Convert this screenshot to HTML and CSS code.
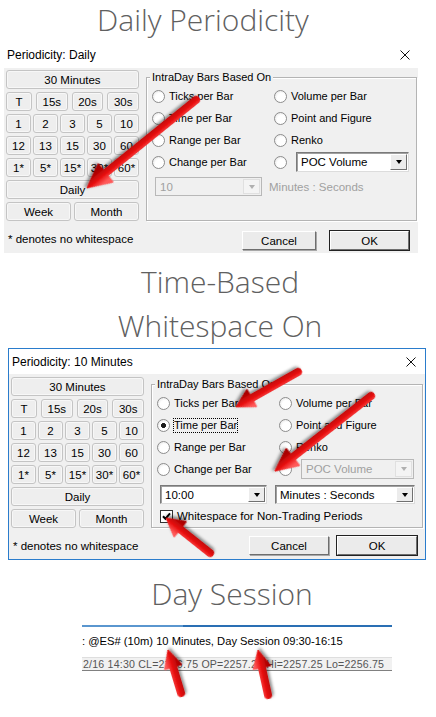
FILE: index.html
```html
<!DOCTYPE html>
<html lang="en">
<head>
    <meta charset="UTF-8">
    <meta name="viewport" content="width=device-width, initial-scale=1.0">
    <title>Periodicity Settings</title>
    <link rel="stylesheet" href="styles.css">
</head>
<body>
    <div class="page">
        <h1 class="title title-daily">Daily Periodicity</h1>

        <!-- first dialog: daily selected -->
        <div class="dialog">
            <div class="titlebar">
                <span>Periodicity: Daily</span>
                <svg class="close" width="10" height="10" viewBox="0 0 10 10"><path d="M0.5 0.5L9.5 9.5M9.5 0.5L0.5 9.5"/></svg>
            </div>
            <div class="dialog-body">
                <div class="presets">
                    <button class="btn">30 Minutes</button>
                    <div class="btn-row row-four">
                        <button class="btn">T</button>
                        <button class="btn">15s</button>
                        <button class="btn">20s</button>
                        <button class="btn">30s</button>
                    </div>
                    <div class="btn-row row-five">
                        <button class="btn">1</button>
                        <button class="btn">2</button>
                        <button class="btn">3</button>
                        <button class="btn">5</button>
                        <button class="btn">10</button>
                    </div>
                    <div class="btn-row row-five">
                        <button class="btn">12</button>
                        <button class="btn">13</button>
                        <button class="btn">15</button>
                        <button class="btn">30</button>
                        <button class="btn">60</button>
                    </div>
                    <div class="btn-row row-five">
                        <button class="btn">1*</button>
                        <button class="btn">5*</button>
                        <button class="btn">15*</button>
                        <button class="btn">30*</button>
                        <button class="btn">60*</button>
                    </div>
                    <button class="btn">Daily</button>
                    <div class="btn-row row-two">
                        <button class="btn">Week</button>
                        <button class="btn">Month</button>
                    </div>
                    <p class="note">* denotes no whitespace</p>
                </div>

                <div class="options">
                    <div class="group">
                        <div class="group-label">IntraDay Bars Based On</div>
                        <div class="radios">
                            <div class="radio"><span class="dot"></span>Ticks per Bar</div>
                            <div class="radio"><span class="dot"></span>Volume per Bar</div>
                            <div class="radio"><span class="dot"></span>Time per Bar</div>
                            <div class="radio"><span class="dot"></span>Point and Figure</div>
                            <div class="radio"><span class="dot"></span>Range per Bar</div>
                            <div class="radio"><span class="dot"></span>Renko</div>
                            <div class="radio"><span class="dot"></span>Change per Bar</div>
                            <div class="radio radio-select">
                                <span class="dot"></span>
                                <div class="combo combo-poc"><span class="combo-value">POC Volume</span><span class="combo-btn"></span></div>
                            </div>
                        </div>
                        <div class="interval">
                            <div class="combo combo-time disabled"><span class="combo-value">10</span><span class="combo-btn"></span></div>
                            <span class="muted">Minutes : Seconds</span>
                        </div>
                    </div>
                    <div class="actions">
                        <button class="push">Cancel</button>
                        <button class="push push-default">OK</button>
                    </div>
                </div>
            </div>
        </div>

        <h1 class="title title-whitespace">Time-Based<br>Whitespace On</h1>

        <!-- second dialog: time per bar with whitespace -->
        <div class="dialog dialog-framed">
            <div class="titlebar">
                <span>Periodicity: 10 Minutes</span>
                <svg class="close" width="10" height="10" viewBox="0 0 10 10"><path d="M0.5 0.5L9.5 9.5M9.5 0.5L0.5 9.5"/></svg>
            </div>
            <div class="dialog-body">
                <div class="presets">
                    <button class="btn">30 Minutes</button>
                    <div class="btn-row row-four">
                        <button class="btn">T</button>
                        <button class="btn">15s</button>
                        <button class="btn">20s</button>
                        <button class="btn">30s</button>
                    </div>
                    <div class="btn-row row-five">
                        <button class="btn">1</button>
                        <button class="btn">2</button>
                        <button class="btn">3</button>
                        <button class="btn">5</button>
                        <button class="btn">10</button>
                    </div>
                    <div class="btn-row row-five">
                        <button class="btn">12</button>
                        <button class="btn">13</button>
                        <button class="btn">15</button>
                        <button class="btn">30</button>
                        <button class="btn">60</button>
                    </div>
                    <div class="btn-row row-five">
                        <button class="btn">1*</button>
                        <button class="btn">5*</button>
                        <button class="btn">15*</button>
                        <button class="btn">30*</button>
                        <button class="btn">60*</button>
                    </div>
                    <button class="btn">Daily</button>
                    <div class="btn-row row-two">
                        <button class="btn">Week</button>
                        <button class="btn">Month</button>
                    </div>
                    <p class="note">* denotes no whitespace</p>
                </div>

                <div class="options">
                    <div class="group">
                        <div class="group-label">IntraDay Bars Based On</div>
                        <div class="radios">
                            <div class="radio"><span class="dot"></span>Ticks per Bar</div>
                            <div class="radio"><span class="dot"></span>Volume per Bar</div>
                            <div class="radio"><span class="dot checked"></span><span class="focus">Time per Bar</span></div>
                            <div class="radio"><span class="dot"></span>Point and Figure</div>
                            <div class="radio"><span class="dot"></span>Range per Bar</div>
                            <div class="radio"><span class="dot"></span>Renko</div>
                            <div class="radio"><span class="dot"></span>Change per Bar</div>
                            <div class="radio radio-select">
                                <span class="dot"></span>
                                <div class="combo combo-poc disabled"><span class="combo-value">POC Volume</span><span class="combo-btn"></span></div>
                            </div>
                        </div>
                        <div class="interval">
                            <div class="combo combo-time"><span class="combo-value">10:00</span><span class="combo-btn"></span></div>
                            <div class="combo combo-unit"><span class="combo-value">Minutes : Seconds</span><span class="combo-btn"></span></div>
                        </div>
                        <div class="check-row">
                            <span class="checkbox">
                                <svg width="9" height="9" viewBox="0 0 9 9"><path d="M1 4.2L3.4 6.8L8 1.4"/></svg>
                            </span>
                            Whitespace for Non-Trading Periods
                        </div>
                    </div>
                    <div class="actions">
                        <button class="push">Cancel</button>
                        <button class="push push-default">OK</button>
                    </div>
                </div>
            </div>
        </div>

        <h1 class="title title-session">Day Session</h1>

        <div class="chart">
            <div class="chart-rule"></div>
            <div class="chart-caption">: @ES# (10m) 10 Minutes, Day Session 09:30-16:15</div>
            <div class="status">2/16 14:30 CL=2256.75 OP=2257.25 Hi=2257.25 Lo=2256.75</div>
        </div>

        <!-- callout arrows drawn over the screenshots -->
        <svg class="arrows" width="436" height="717" viewBox="0 0 436 717">
            <defs>
                <linearGradient id="redShade" gradientUnits="userSpaceOnUse" x1="0" y1="-7" x2="0" y2="7">
                    <stop offset="0" stop-color="#ff5a5a"/>
                    <stop offset="0.45" stop-color="#e81010"/>
                    <stop offset="1" stop-color="#a80000"/>
                </linearGradient>
                <filter id="arrowShadow" x="-30%" y="-60%" width="160%" height="220%">
                    <feDropShadow dx="1.5" dy="2" stdDeviation="1.4" flood-color="#000" flood-opacity="0.45"/>
                </filter>
            </defs>
            <g class="arrow" transform="translate(196 100) rotate(141.1)">
                <path class="shaft" d="M0 0H118"/>
                <path class="head" d="M116 -12L140 0L116 12Z"/>
            </g>
            <g class="arrow" transform="translate(298 372) rotate(150.6)">
                <path class="shaft" d="M0 0H55"/>
                <path class="head" d="M53 -10L71 0L53 10Z"/>
            </g>
            <g class="arrow" transform="translate(371 396) rotate(142)">
                <path class="shaft" d="M0 0H101"/>
                <path class="head" d="M99 -11L122 0L99 11Z"/>
            </g>
            <g class="arrow" transform="translate(210 553) rotate(218.5)">
                <path class="shaft" d="M0 0H40"/>
                <path class="head" d="M38 -10L56 0L38 10Z"/>
            </g>
            <g class="arrow" transform="translate(181 693) rotate(253.2)">
                <path class="shaft" d="M0 0H29"/>
                <path class="head" d="M27 -9L45 0L27 9Z"/>
            </g>
            <g class="arrow" transform="translate(268 695) rotate(257.5)">
                <path class="shaft" d="M0 0H30"/>
                <path class="head" d="M28 -9L46 0L28 9Z"/>
            </g>
        </svg>
    </div>
</body>
</html>
```

FILE: styles.css
```css
:root {
    --dialog-bg: #f0f0f0;
    --btn-border: #c4c4c4;
    --group-border: #b4b4b4;
    --title-gray: #606060;
    --frame-blue: #2a7ccc;
    --disabled-text: #a0a0a0;
}

body {
    margin: 0;
    background: #ffffff;
    font-family: "Liberation Sans", Arial, sans-serif;
    font-size: 11px;
    color: #000;
}

.page {
    position: relative;
    width: 436px;
    height: 717px;
    overflow: hidden;
}

/* big section headings */
.title {
    margin: 0;
    font-family: "Open Sans", "Noto Sans", sans-serif;
    font-weight: 300;
    font-size: 30px;
    color: var(--title-gray);
    text-align: center;
    line-height: 40px;
}

.title-daily {
    height: 42px;
    padding-right: 30px;
}

.title-whitespace {
    height: 88px;
    padding-top: 7px;
    padding-left: 4px;
    line-height: 44px;
}

.title-session {
    padding-top: 14px;
    padding-left: 28px;
}

/* dialog window */
.dialog {
    width: 414px;
    margin-left: 4px;
    background: var(--dialog-bg);
    box-sizing: border-box;
}

.dialog-framed {
    width: 418px;
    margin-left: 8px;
    border: 1px solid var(--frame-blue);
}

.titlebar {
    height: 26px;
    background: #fff;
    display: flex;
    align-items: center;
    justify-content: space-between;
    padding: 0 8px 0 3px;
    font-size: 12px;
}

.dialog-framed .titlebar {
    height: 25px;
    padding-right: 9px;
}

.close path {
    stroke: #111;
    stroke-width: 1;
    fill: none;
}

.dialog-body {
    height: 185px;
    display: flex;
    gap: 7px;
    padding: 2px 1px 0 2px;
    box-sizing: border-box;
}

.dialog-framed .dialog-body {
    padding: 3px 2px 0 2px;
}

/* left column of preset buttons */
.presets {
    width: 133px;
    display: flex;
    flex-direction: column;
    gap: 3px;
}

.btn {
    height: 19px;
    margin: 0;
    padding: 0;
    font: inherit;
    font-size: 11.5px;
    color: #000;
    background: #eeeeee;
    border: 1px solid var(--btn-border);
    border-radius: 3px;
    box-shadow: inset 0 0 0 1px #f7f7f7;
}

.btn-row {
    display: grid;
    gap: 3px;
}

.row-four {
    grid-template-columns: 26px repeat(3, 1fr);
    gap: 4px;
}

.row-five {
    grid-template-columns: repeat(5, 1fr);
    gap: 2px;
}

.row-two {
    grid-template-columns: 1fr 1fr;
}

.note {
    margin: 8px 0 0 2px;
    font-size: 11.5px;
    line-height: 14px;
}

/* right column */
.options {
    flex: 1;
    display: flex;
    flex-direction: column;
}

.group {
    margin-top: 7px;
    height: 144px;
    padding: 0 5px;
    border: 1px solid var(--group-border);
    box-shadow: inset 1px 1px 0 #fff, 1px 1px 0 #fff;
    box-sizing: border-box;
}

.group-label {
    width: fit-content;
    margin: -7px 0 0 -2px;
    padding: 0 2px;
    line-height: 13px;
    background: var(--dialog-bg);
}

.radios {
    display: grid;
    grid-template-columns: 122px 1fr;
    grid-auto-rows: 22px;
    margin-top: 1px;
}

.radio {
    display: flex;
    align-items: center;
    gap: 4px;
    white-space: nowrap;
}

.dot {
    width: 11px;
    height: 11px;
    border-radius: 50%;
    border: 1px solid #8d8d8d;
    background: radial-gradient(circle at 60% 60%, #ffffff 45%, #dcdcdc 100%);
    flex: none;
}

.dot.checked {
    background: radial-gradient(circle, #1a1a1a 2.2px, transparent 2.8px),
                radial-gradient(circle at 60% 60%, #ffffff 45%, #dcdcdc 100%);
}

.focus {
    outline: 1px dotted #000;
    outline-offset: 0;
    line-height: 13px;
}

.radio-select {
    gap: 9px;
}

/* combo boxes */
.combo {
    display: flex;
    height: 20px;
    background: #fff;
    border: 1px solid #7a7a7a;
    border-right-color: #dcdcdc;
    border-bottom-color: #dcdcdc;
    box-shadow: inset 1px 1px 0 #a0a0a0;
    box-sizing: border-box;
    font-size: 11.5px;
}

.combo-value {
    flex: 1;
    padding-left: 4px;
    line-height: 18px;
    white-space: nowrap;
    overflow: hidden;
}

.combo-btn {
    width: 15px;
    margin: 1px;
    background: #ececec;
    border: 1px solid #fff;
    border-right-color: #707070;
    border-bottom-color: #707070;
    display: flex;
    align-items: center;
    justify-content: center;
}

.combo-btn::after {
    content: "";
    border-left: 3.5px solid transparent;
    border-right: 3.5px solid transparent;
    border-top: 4px solid #000;
}

.combo.disabled {
    background: var(--dialog-bg);
    color: var(--disabled-text);
    border-color: #b8b8b8;
    box-shadow: none;
}

.combo.disabled .combo-btn {
    border-color: #e0e0e0;
    background: #f4f4f4;
}

.combo.disabled .combo-btn::after {
    border-top-color: #b0b0b0;
}

.combo-poc {
    width: 113px;
}

.combo-time {
    width: 107px;
    height: 19px;
}

.combo-unit {
    width: 140px;
    height: 19px;
}

.interval {
    display: flex;
    align-items: center;
    gap: 7px;
    margin: 4px 0 0 3px;
}

.dialog-framed .interval {
    gap: 8px;
    margin-top: 5px;
}

.muted {
    color: var(--disabled-text);
    font-size: 11.5px;
}

.check-row {
    display: flex;
    align-items: center;
    gap: 4px;
    margin: 6px 0 0 3px;
    line-height: 13px;
    font-size: 11.5px;
}

.checkbox {
    width: 11px;
    height: 11px;
    border: 1px solid #333;
    background: #fff;
    display: flex;
    align-items: center;
    justify-content: center;
}

.checkbox path {
    stroke: #000;
    stroke-width: 2;
    fill: none;
}

/* Cancel / OK */
.actions {
    display: flex;
    justify-content: flex-end;
    gap: 14px;
    margin-top: 10px;
    padding-right: 8px;
}

.push {
    width: 74px;
    height: 19px;
    margin: 0;
    padding: 0;
    font: inherit;
    font-size: 11.5px;
    color: #000;
    background: #ebebeb;
    border: 1px solid #fff;
    border-right-color: #6e6e6e;
    border-bottom-color: #6e6e6e;
    box-shadow: 1px 1px 0 #a8a8a8;
}

.push-default {
    width: 79px;
    outline: 1px solid #222;
}

.dialog-framed .actions {
    gap: 8px;
    margin-top: 8px;
    padding-right: 6px;
}

.dialog-framed .push {
    width: 80px;
}

/* chart title strip */
.chart {
    width: 310px;
    margin: 11px 0 0 82px;
}

.chart-rule {
    height: 2px;
    background: linear-gradient(to right, #5a96cf 0, #5a96cf 101px, #2a6fb4 101px);
}

.chart-caption {
    margin-top: 6px;
    line-height: 16px;
    font-size: 11.2px;
    white-space: nowrap;
}

.status {
    height: 14px;
    margin-top: 8px;
    padding-left: 1px;
    line-height: 13px;
    font-size: 10.6px;
    letter-spacing: 0.2px;
    color: #555;
    background: #f1f1f1;
    border-top: 1px solid #dedede;
    border-bottom: 1px solid #808080;
    box-sizing: border-box;
    white-space: nowrap;
    overflow: hidden;
}

/* overlay arrows */
.arrows {
    position: absolute;
    top: 0;
    left: 0;
    pointer-events: none;
}

.arrow {
    filter: url(#arrowShadow);
}

.shaft {
    stroke: url(#redShade);
    stroke-width: 8;
    stroke-linecap: round;
    fill: none;
}

.head {
    fill: url(#redShade);
    stroke: url(#redShade);
    stroke-width: 1;
    stroke-linejoin: round;
}
```
